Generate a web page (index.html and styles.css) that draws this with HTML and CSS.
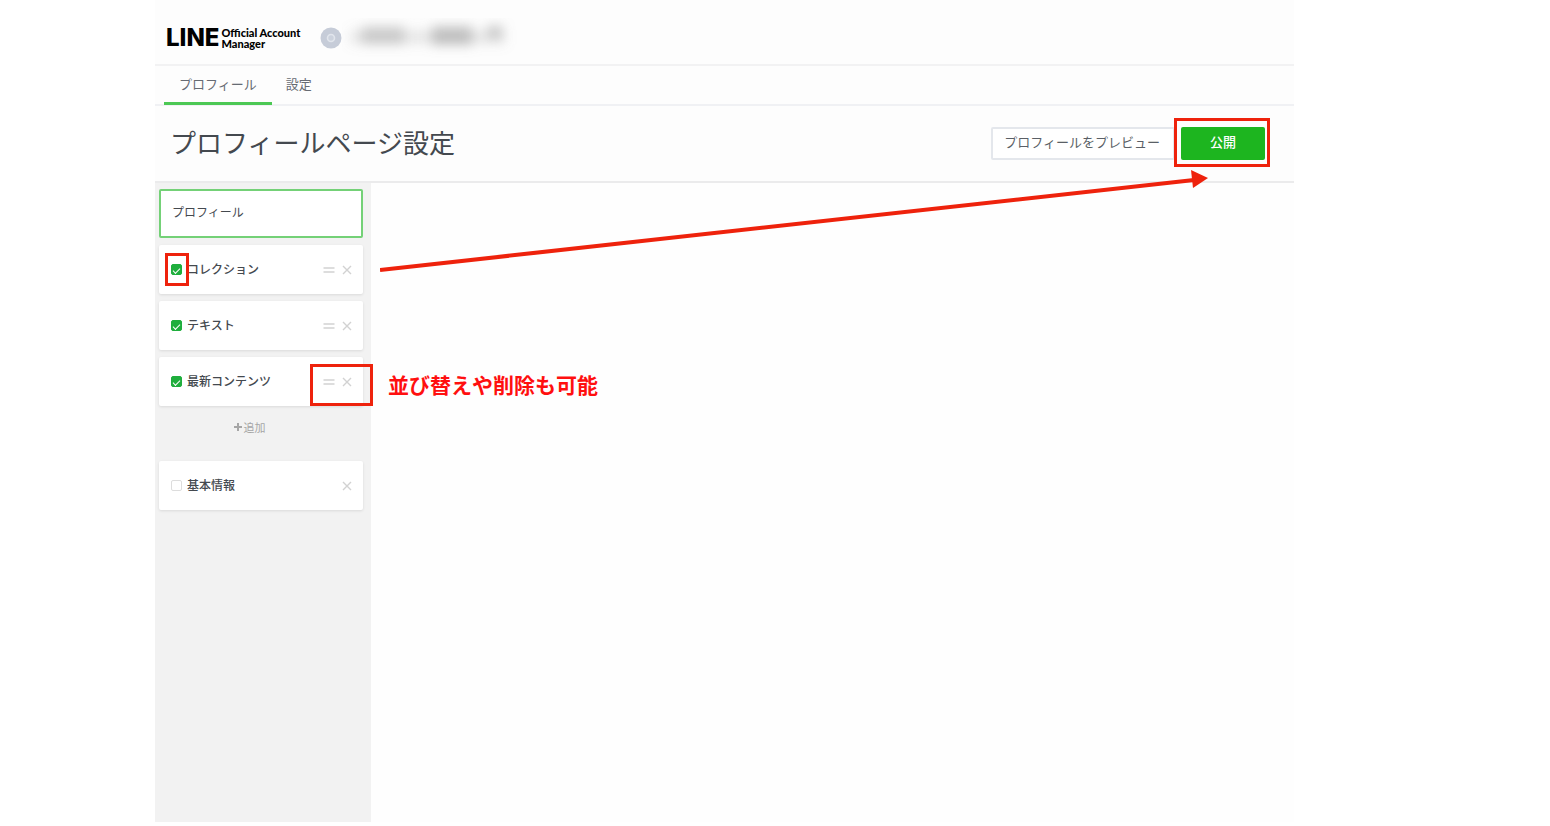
FILE: index.html
```
<!DOCTYPE html>
<html lang="ja">
<head>
    <meta charset="UTF-8">
    <meta name="viewport" content="width=device-width, initial-scale=1.0">
    <title>プロフィールページ設定</title>
    <link rel="stylesheet" href="styles.css">
</head>
<body>
    <!--top bar-->
    <header class="topbar">
        <a href="#" class="logo">
            <span class="logo-line">LINE</span>
            <span class="logo-sub">Official Account<br>Manager</span>
        </a>
        <svg class="avatar" viewBox="0 0 22 22" aria-hidden="true">
            <circle cx="11" cy="11" r="10.5" fill="#c6ccd8"/>
            <circle cx="11" cy="11" r="3.5" fill="#ccd2dd" stroke="#e1e5ec" stroke-width="1.6"/>
        </svg>
        <!--account name is hidden-->
        <svg class="hidden-name" viewBox="0 0 180 40" aria-hidden="true">
            <defs>
                <filter id="soft" x="-20%" y="-80%" width="140%" height="260%">
                    <feGaussianBlur stdDeviation="6"/>
                </filter>
            </defs>
            <g filter="url(#soft)" fill="#8f8f8f">
                <rect x="8" y="12" width="155" height="14" opacity="0.2"/>
                <rect x="20" y="8" width="42" height="18" opacity="0.35"/>
                <rect x="90" y="8" width="40" height="19" opacity="0.45"/>
                <rect x="146" y="7" width="14" height="13" opacity="0.4"/>
            </g>
        </svg>
    </header>

    <nav class="tabs">
        <a href="#" class="tab active">プロフィール</a>
        <a href="#" class="tab">設定</a>
    </nav>

    <section class="title-row">
        <h1>プロフィールページ設定</h1>
        <div class="buttons">
            <button type="button" class="btn-preview">プロフィールをプレビュー</button>
            <div class="marked">
                <button type="button" class="btn-publish">公開</button>
                <span class="frame frame-publish"></span>
            </div>
        </div>
    </section>

    <div class="content">
        <!--list of parts-->
        <aside class="sidebar">
            <button type="button" class="card selected">プロフィール</button>

            <div class="card">
                <input type="checkbox" id="collection" checked>
                <label for="collection">コレクション</label>
                <button type="button" class="icon-btn" aria-label="並び替え">
                    <svg viewBox="0 0 12 12"><path d="M0.5 4h11M0.5 8h11"/></svg>
                </button>
                <button type="button" class="icon-btn" aria-label="削除">
                    <svg viewBox="0 0 12 12"><path d="M2 2l8 8M10 2l-8 8"/></svg>
                </button>
                <span class="frame frame-check"></span>
            </div>

            <div class="card">
                <input type="checkbox" id="text" checked>
                <label for="text">テキスト</label>
                <button type="button" class="icon-btn" aria-label="並び替え">
                    <svg viewBox="0 0 12 12"><path d="M0.5 4h11M0.5 8h11"/></svg>
                </button>
                <button type="button" class="icon-btn" aria-label="削除">
                    <svg viewBox="0 0 12 12"><path d="M2 2l8 8M10 2l-8 8"/></svg>
                </button>
            </div>

            <div class="card">
                <input type="checkbox" id="latest" checked>
                <label for="latest">最新コンテンツ</label>
                <button type="button" class="icon-btn" aria-label="並び替え">
                    <svg viewBox="0 0 12 12"><path d="M0.5 4h11M0.5 8h11"/></svg>
                </button>
                <button type="button" class="icon-btn" aria-label="削除">
                    <svg viewBox="0 0 12 12"><path d="M2 2l8 8M10 2l-8 8"/></svg>
                </button>
                <span class="frame frame-actions"></span>
                <span class="note">並び替えや削除も可能</span>
            </div>

            <button type="button" class="add">
                <svg viewBox="0 0 10 10"><path d="M5 1v8M1 5h8"/></svg>
                追加
            </button>

            <div class="card">
                <input type="checkbox" id="basic">
                <label for="basic">基本情報</label>
                <button type="button" class="icon-btn" aria-label="削除">
                    <svg viewBox="0 0 12 12"><path d="M2 2l8 8M10 2l-8 8"/></svg>
                </button>
            </div>
        </aside>

        <main class="editor">
            <!--arrow to the publish button-->
            <svg class="arrow" viewBox="0 0 828 104" aria-hidden="true">
                <path d="M0 100L814 10" stroke="#ee220c" stroke-width="4" fill="none"/>
                <path d="M828 8L811 0L813 18z" fill="#ee220c"/>
            </svg>
        </main>
    </div>
</body>
</html>
```
FILE: styles.css
```
*{
    margin: 0;
    box-sizing: border-box;
}
body{
    display: flex;
    flex-direction: column;
    min-height: 100vh;
    padding: 0 256px 4px 155px;
    background-color: #ffffff;
    color: #44494f;
    font-family: "Noto Sans CJK JP", sans-serif;
    font-size: 12px;
}
button{
    font-family: inherit;
    color: inherit;
    cursor: pointer;
}
a{
    color: inherit;
    text-decoration: none;
}

/* top bar */
.topbar{
    display: flex;
    align-items: center;
    height: 66px;
    padding: 12px 11px 0;
    border-bottom: 2px solid #f2f2f3;
    background-color: #fdfdfd;
}
.logo{
    display: flex;
    align-items: center;
    gap: 2px;
    color: #000000;
    font-family: Lato, sans-serif;
    font-weight: 900;
}
.logo-line{
    font-family: Inter, sans-serif;
    font-size: 24px;
    font-weight: 800;
    line-height: 24px;
}
.logo-sub{
    font-size: 11px;
    line-height: 11px;
}
.avatar{
    width: 22px;
    height: 22px;
    margin-left: 20px;
}
.hidden-name{
    width: 180px;
    height: 40px;
}

/* tabs */
.tabs{
    display: flex;
    height: 40px;
    padding: 0 9px;
    border-bottom: 2px solid #f0f1f4;
    background-color: #fdfdfd;
}
.tab{
    height: 39px;
    padding: 0 14px;
    border-bottom: 3px solid transparent;
    color: #666b73;
    font-size: 13px;
    line-height: 36px;
}
.tab.active{
    padding: 0 15px;
    border-color: #4cc854;
}

/* title and buttons */
.title-row{
    display: flex;
    justify-content: space-between;
    align-items: center;
    height: 77px;
    padding: 0 29px 0 15px;
    border-bottom: 2px solid #ebebec;
    background-color: #fdfdfd;
}
h1{
    padding-bottom: 4px;
    font-size: 26px;
    font-weight: 400;
    line-height: 40px;
}
.buttons{
    display: flex;
    gap: 6px;
}
.btn-preview,.btn-publish{
    height: 33px;
    border-radius: 2px;
    font-size: 13px;
}
.btn-preview{
    padding: 0 13px 4px 11px;
    border: 2px solid #e4e7ec;
    background-color: #ffffff;
    color: #5a5f66;
}
.btn-publish{
    width: 84px;
    padding: 0 12px 4px;
    border: none;
    background-color: #1db51f;
    color: #ffffff;
    font-weight: 500;
}
.marked{
    position: relative;
}

/* sidebar */
.content{
    display: flex;
    flex: 1;
}
.sidebar{
    position: relative;
    z-index: 1;
    display: flex;
    flex-direction: column;
    gap: 7px;
    width: 216px;
    padding: 6px 8px 6px 4px;
    background-color: #f2f2f2;
}
.card{
    position: relative;
    display: flex;
    align-items: center;
    gap: 6px;
    height: 49px;
    padding: 0 10px 0 12px;
    border: none;
    border-radius: 2px;
    background-color: #ffffff;
    box-shadow: 0 1px 3px rgba(0, 0, 0, 0.1);
    font-size: 12px;
    text-align: left;
}
.card.selected{
    padding: 0 11px 4px;
    border: 2px solid #74d177;
    box-shadow: none;
}
.card label{
    flex: 1;
    margin-left: -1px;
    padding-bottom: 2px;
    font-weight: 500;
}
.card input{
    display: grid;
    place-items: center;
    appearance: none;
    width: 11px;
    height: 11px;
    border: 1px solid #dddddd;
    border-radius: 2px;
    background-color: #ffffff;
}
.card input:checked{
    border-color: #1fae3d;
    background-color: #1fae3d;
}
.card input:checked::before{
    content: "";
    width: 6px;
    height: 3px;
    border-left: 1px solid #ffffff;
    border-bottom: 1px solid #ffffff;
    transform: rotate(-45deg);
}
.icon-btn{
    display: flex;
    padding: 0;
    border: none;
    background: none;
}
.icon-btn svg{
    width: 12px;
    height: 12px;
    fill: none;
    stroke: #d2d2d2;
    stroke-width: 1.4;
}
.add{
    display: flex;
    justify-content: center;
    align-items: center;
    gap: 1px;
    height: 41px;
    margin-right: 24px;
    padding: 0 0 13px;
    border: none;
    background: none;
    color: #a6a6a6;
    font-size: 11px;
}
.add svg{
    width: 10px;
    height: 10px;
    stroke: #a6a6a6;
    stroke-width: 2;
}
.editor{
    position: relative;
    flex: 1;
    background-color: #fefefe;
}

/* red marks over the page */
.frame{
    position: absolute;
    border: 3px solid #ee220c;
    pointer-events: none;
}
.frame-publish{
    inset: -9px -5px -7px -7px;
}
.frame-check{
    top: 8px;
    left: 6px;
    width: 24px;
    height: 33px;
}
.frame-actions{
    top: 7px;
    right: -10px;
    width: 63px;
    height: 42px;
}
.note{
    position: absolute;
    top: 12px;
    left: 229px;
    color: #ff0f0f;
    font-size: 21px;
    font-weight: 700;
    line-height: 30px;
    white-space: nowrap;
}
.arrow{
    position: absolute;
    top: -13px;
    left: 9px;
    width: calc(100% - 95px);
}
```
